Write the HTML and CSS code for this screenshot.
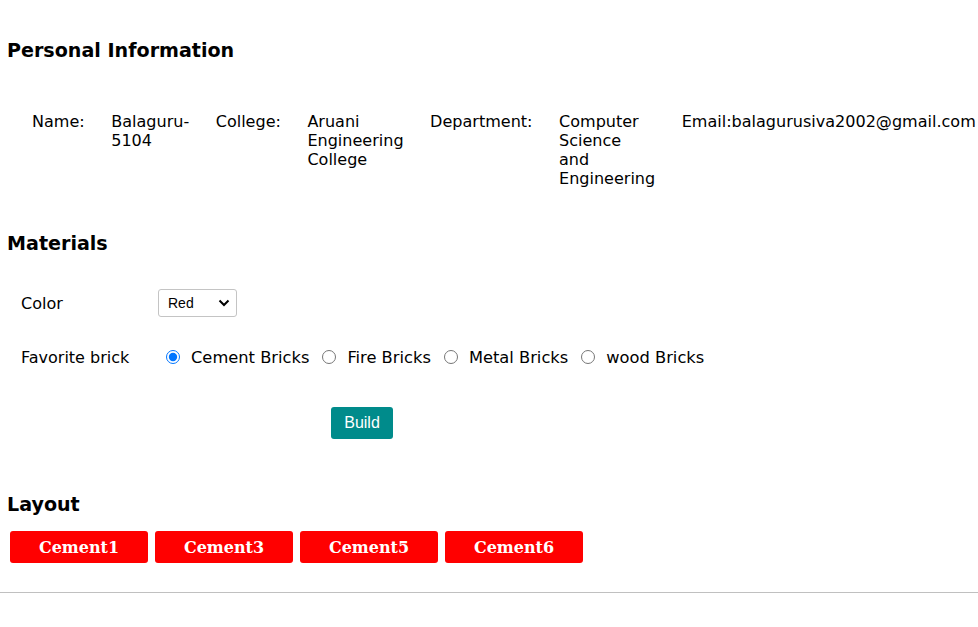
FILE: index.html
```html
<!DOCTYPE html>
<html>
<head>
<meta charset="utf-8">
<link rel="stylesheet" href="styles.css">
</head>
<body>
<main class="page">
  <h3 class="title title-first">Personal Information</h3>
  <div class="info">
    <div class="cell">Name:</div>
    <div class="cell">Balaguru-5104</div>
    <div class="cell">College:</div>
    <div class="cell">Aruani Engineering College</div>
    <div class="cell">Department:</div>
    <div class="cell">Computer Science and Engineering</div>
    <div class="cell">Email:balagurusiva2002@gmail.com</div>
  </div>

  <h3 class="title title-materials">Materials</h3>
  <div class="form">
    <div class="row row-color">
      <span class="label">Color</span>
      <div class="select-wrap">
        <select class="select">
          <option>Red</option>
          <option>Blue</option>
          <option>Green</option>
        </select>
        <svg class="chev" width="12" height="8" viewBox="0 0 12 8"><path d="M1.5 1.5 L6 6 L10.5 1.5" fill="none" stroke="#000" stroke-width="2"/></svg>
      </div>
    </div>
    <div class="row row-brick">
      <span class="label">Favorite brick</span>
      <div class="radios">
        <label class="radio"><input type="radio" name="brick" checked><span>Cement Bricks</span></label>
        <label class="radio"><input type="radio" name="brick"><span>Fire Bricks</span></label>
        <label class="radio"><input type="radio" name="brick"><span>Metal Bricks</span></label>
        <label class="radio"><input type="radio" name="brick"><span>wood Bricks</span></label>
      </div>
    </div>
    <div class="build-row">
      <button class="build">Build</button>
    </div>
  </div>

  <h3 class="title title-layout">Layout</h3>
  <div class="bricks">
    <div class="brick">Cement1</div>
    <div class="brick">Cement3</div>
    <div class="brick">Cement5</div>
    <div class="brick">Cement6</div>
  </div>
</main>
<hr class="rule">
</body>
</html>
```
FILE: styles.css
```css
html, body {
  margin: 0;
  padding: 0;
  background: #fff;
}
body {
  font-family: "DejaVu Sans", Verdana, sans-serif;
  font-size: 16px;
  color: #000;
  overflow: hidden;
}
.page {
  padding: 0 0 0 7px;
}
.title {
  font-size: 19.1px;
  font-weight: bold;
  line-height: 22px;
  margin: 0;
}
.title-first { padding-top: 40px; }
.info {
  display: flex;
  align-items: flex-start;
  column-gap: 26.5px;
  margin: 50px 0 0 25px;
  line-height: 19px;
  font-size: 16.05px;
  white-space: nowrap;
}
.cell {
  width: min-content;
  white-space: normal;
}
.cell:last-child { width: auto; white-space: nowrap; }
.title-materials { margin-top: 45px; }
.form {
  margin-left: 14px;
  font-size: 16px;
}
.row {
  display: flex;
  align-items: center;
}
.label {
  width: 137px;
  flex: none;
}
.row-color {
  margin-top: 34px;
  height: 28px;
}
.select-wrap {
  position: relative;
  width: 79px;
  height: 28px;
}
.select {
  appearance: none;
  -webkit-appearance: none;
  width: 79px;
  height: 28px;
  border: 1px solid #c4c4c4;
  border-radius: 3px;
  background: #fff;
  font-family: "Liberation Sans", Arial, sans-serif;
  font-size: 14px;
  padding: 0 0 0 9px;
  color: #000;
}
.chev {
  position: absolute;
  right: 7px;
  top: 10px;
  pointer-events: none;
}
.row-brick {
  margin-top: 26px;
  height: 28px;
}
.radios {
  display: flex;
  align-items: center;
  margin-left: 1px;
  font-size: 16.3px;
}
.radio {
  display: flex;
  align-items: center;
}
.radio input {
  width: 14px;
  height: 14px;
  margin: 0 11px 0 13px;
}
.radio:first-child input { margin-left: 7px; }
.build-row {
  margin-top: 36px;
  padding-left: 310px;
}
.build {
  background: #008b8b;
  color: #fff;
  border: none;
  border-radius: 3px;
  font-family: "Liberation Sans", Arial, sans-serif;
  font-size: 16px;
  width: 62px;
  height: 32px;
  padding: 0;
}
.title-layout { margin-top: 55px; }
.bricks {
  display: flex;
  gap: 7px;
  margin: 15px 0 0 3px;
}
.brick {
  width: 138px;
  height: 32px;
  background: #ff0000;
  color: #fff;
  border-radius: 3px;
  font-family: "DejaVu Serif", Georgia, serif;
  font-weight: bold;
  font-size: 16px;
  display: flex;
  align-items: center;
  justify-content: center;
}
.rule {
  margin: 29px 0 0;
  border: none;
  border-top: 1px solid #c0c0c0;
  height: 0;
}
```
